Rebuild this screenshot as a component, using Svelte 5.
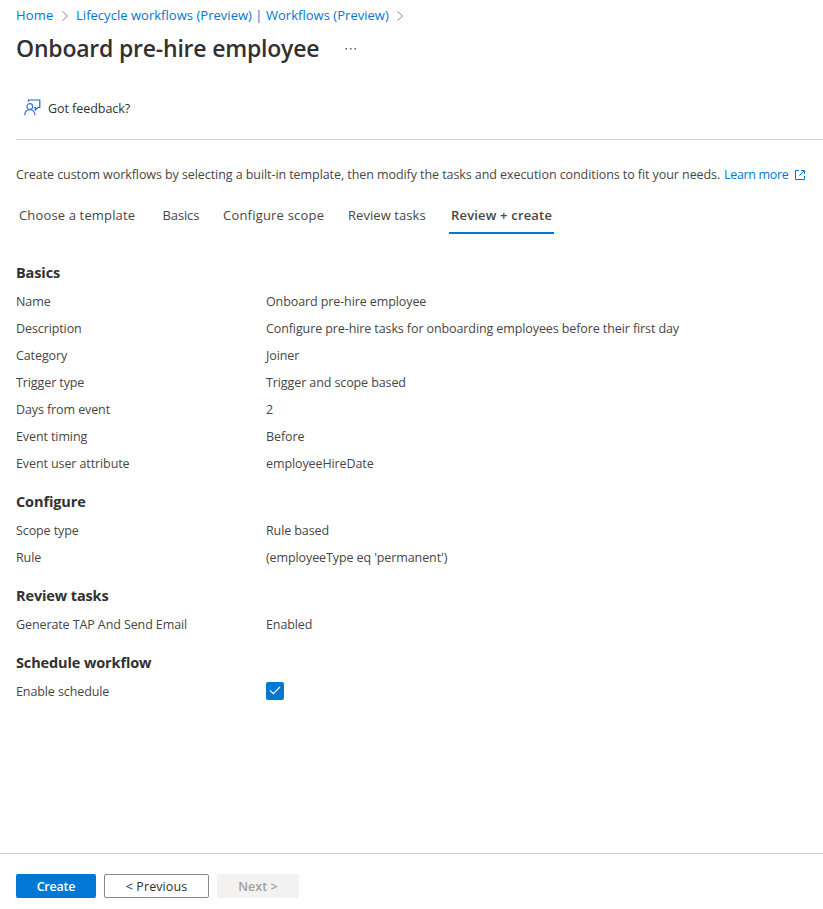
<script>
  const tabs = [
    { label: 'Choose a template', width: 143.5, spacing: 0.15 },
    { label: 'Basics', width: 60.5, spacing: -0.12 },
    { label: 'Configure scope', width: 125, spacing: 0.2 },
    { label: 'Review tasks', width: 104, spacing: 0.06 },
    { label: 'Review + create', width: 105, spacing: 0.18, active: true }
  ];

  const sections = [
    {
      title: 'Basics',
      rows: [
        ['Name', 'Onboard pre-hire employee'],
        ['Description', 'Configure pre-hire tasks for onboarding employees before their first day'],
        ['Category', 'Joiner'],
        ['Trigger type', 'Trigger and scope based'],
        ['Days from event', '2'],
        ['Event timing', 'Before'],
        ['Event user attribute', 'employeeHireDate']
      ]
    },
    {
      title: 'Configure',
      rows: [
        ['Scope type', 'Rule based'],
        ['Rule', "(employeeType eq 'permanent')"]
      ]
    },
    { title: 'Review tasks', rows: [['Generate TAP And Send Email', 'Enabled']] },
    { title: 'Schedule workflow', rows: [['Enable schedule', true]] }
  ];
</script>

<div class="page">
  <nav class="crumbs">
    <a href="#home">Home</a>
    <svg width="8" height="12" viewBox="0 0 8 12"><path d="M1.5 1.5 6.5 6l-5 4.5" /></svg>
    <a href="#workflows">Lifecycle workflows (Preview) | Workflows (Preview)</a>
    <svg width="8" height="12" viewBox="0 0 8 12"><path d="M1.5 1.5 6.5 6l-5 4.5" /></svg>
  </nav>

  <header>
    <h1>Onboard pre-hire employee</h1>
    <svg class="more" width="12" height="4" viewBox="0 0 12 4"><path d="M.5 1H2v1.5H.5zM5 1h1.5v1.5H5zM9.5 1H11v1.5H9.5z" /></svg>
  </header>

  <div class="toolbar">
    <svg width="17" height="17" viewBox="0 0 17 17">
      <path class="bubble" d="M4.5 2.8V1h11.3v7.5h-1.9l-2.6 2.3V8.5h-1.1" />
      <circle cx="5.8" cy="7.6" r="2.9" />
      <path d="M.7 16.2c.2-3.3 2.3-5.6 5.1-5.6s5 2.3 5.2 5.6" />
    </svg>
    <span>Got feedback?</span>
  </div>

  <p class="intro">
    <span class="desc">Create custom workflows by selecting a built-in template, then modify the tasks and execution conditions to fit your needs.</span>
    <a href="#learn">Learn more</a>
    <svg width="10" height="10" viewBox="0 0 10 10"><path d="M4 .5H.5v9h9V6M6 .5h3.5V4M9.3.7 4.3 5.7" /></svg>
  </p>

  <div class="tabs">
    {#each tabs as tab}
      <div class="tab" class:active={tab.active} style="width: {tab.width}px; letter-spacing: {tab.spacing}px">{tab.label}</div>
    {/each}
  </div>

  <main>
    {#each sections as section}
      <section>
        <h2>{section.title}</h2>
        {#each section.rows as [label, value]}
          <div class="row">
            <span class="label">{label}</span>
            {#if value === true}
              <span class="check"><svg width="12" height="9" viewBox="0 0 12 9"><path d="M1 4.4 4.3 7.7 11 1" /></svg></span>
            {:else}
              <span>{value}</span>
            {/if}
          </div>
        {/each}
      </section>
    {/each}
  </main>

  <footer>
    <button class="primary">Create</button>
    <button class="previous">&lt; Previous</button>
    <button class="next" disabled>Next &gt;</button>
  </footer>
</div>

<style>
  :global(body) { margin: 0; background: #fff; }
  .page {
    box-sizing: border-box;
    width: 823px;
    height: 909px;
    overflow: hidden;
    display: flex;
    flex-direction: column;
    color: #323130;
    font: 12.5px/18px "Open Sans", "Noto Sans", sans-serif;
    letter-spacing: -0.1px;
    white-space: nowrap;
  }
  svg { fill: none; flex: none; }
  a { color: #0078d4; text-decoration: none; }
  .crumbs { display: flex; align-items: center; height: 18px; padding: 6px 16px 0; font-size: 13px; letter-spacing: 0.03px; }
  .crumbs a:first-child { width: 38px; letter-spacing: 0.2px; }
  .crumbs svg { stroke: #8a8886; margin: 1px 7px 0; }
  header { display: flex; align-items: center; height: 32px; padding: 8px 16px 1px; }
  h1 { margin: 0; width: 303px; font-size: 23px; line-height: 32px; font-weight: 600; letter-spacing: -0.21px; }
  .more { margin: 1px 0 0 26px; fill: #605e5c; }
  .toolbar {
    box-sizing: border-box;
    display: flex;
    align-items: center;
    gap: 7px;
    height: 75px;
    margin-left: 16px;
    padding: 13px 0 0 8px;
    border-bottom: 1px solid #d2d0ce;
    letter-spacing: -0.05px;
  }
  .toolbar svg { stroke: #3a6fd8; stroke-width: 1.2; margin-top: -3px; }
  .toolbar .bubble { stroke: #0f6cc8; }
  .intro { display: flex; align-items: center; margin: 26px 0 0 16px; height: 18px; }
  .desc { width: 708px; letter-spacing: -0.072px; color: #484644; }
  .intro a { width: 65px; letter-spacing: -0.32px; }
  .intro svg { stroke: #0078d4; margin-left: 6px; }
  .tabs { display: flex; padding: 18px 0 0 16px; font-size: 13px; color: #484644; }
  .tab { box-sizing: border-box; height: 32px; line-height: 26px; padding-left: 3px; border-bottom: 2px solid transparent; }
  .active { padding-left: 2px; font-weight: 600; border-color: #0078d4; }
  main { padding: 29px 16px 0; flex: 1; }
  section { margin-bottom: 15px; }
  h2 { margin: 0 0 5px; font-size: 14.5px; line-height: 20px; font-weight: 700; letter-spacing: -0.12px; }
  .row { display: flex; align-items: center; height: 27px; color: #484644; }
  .label { width: 250px; }
  .check { display: flex; align-items: center; justify-content: center; width: 18px; height: 18px; margin-bottom: 2px; border-radius: 2px; background: #0078d4; }
  .check svg { stroke: #fff; stroke-width: 1.2; }
  footer { box-sizing: border-box; height: 56px; border-top: 1px solid #d2d0ce; display: flex; gap: 8px; padding: 20px 16px 0; }
  button { box-sizing: border-box; height: 24px; padding: 1px 0 0; border: 1px solid transparent; border-radius: 2px; font: inherit; line-height: 21px; }
  .primary { width: 80px; background: #0078d4; color: #fff; font-weight: 600; letter-spacing: -0.2px; }
  .previous { width: 105px; background: #fff; border-color: #8a8886; color: #323130; letter-spacing: 0.1px; }
  .next { width: 82px; background: #f3f2f1; color: #a19f9d; font-weight: 600; letter-spacing: 0.05px; }
</style>
